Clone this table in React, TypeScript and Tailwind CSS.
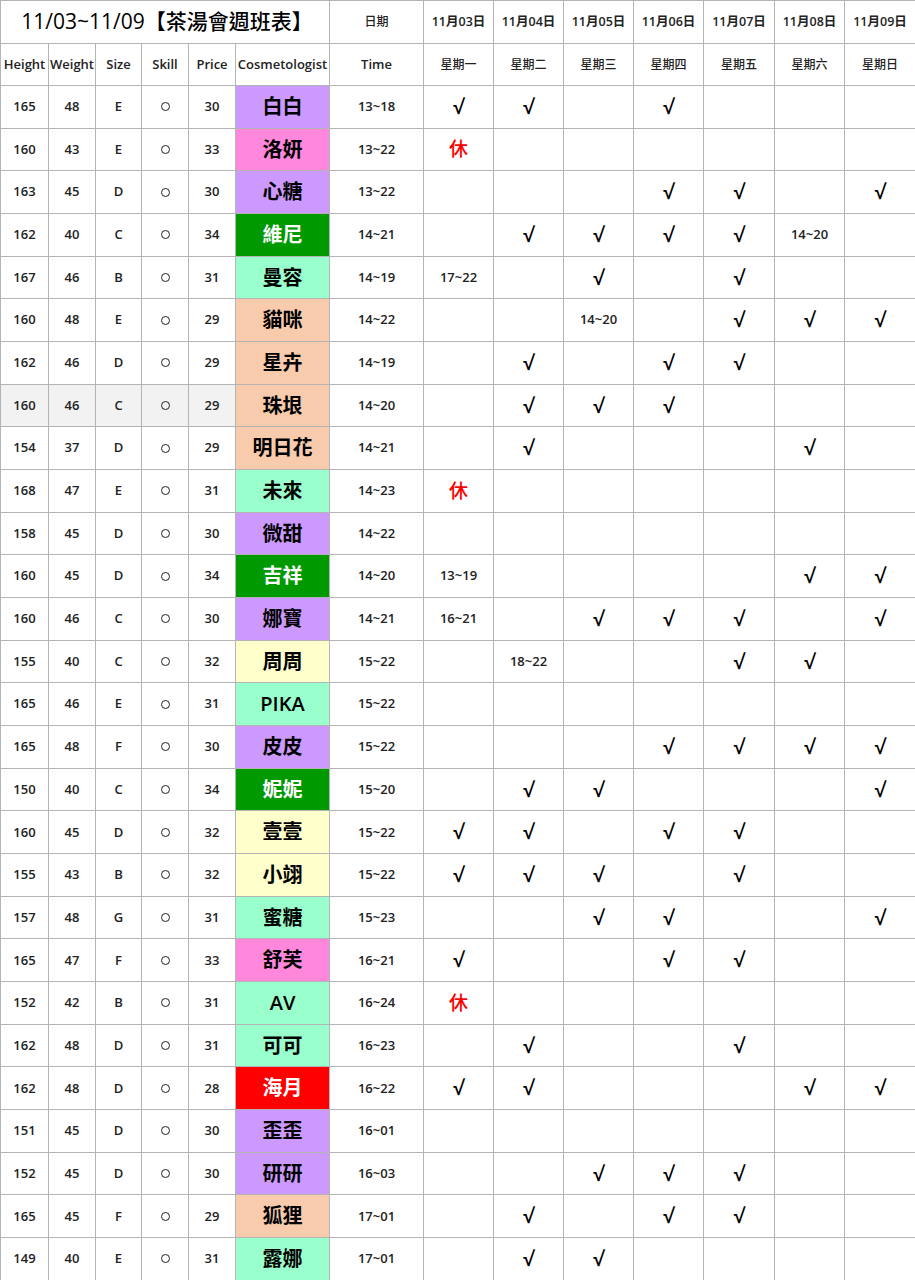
import React from 'react';

type Shift = string;

const PURPLE = 'bg-[#cc99ff] text-black';
const PINK = 'bg-[#ff88dd] text-black';
const GREEN = 'bg-[#009900] text-white';
const MINT = 'bg-[#99ffcc] text-black';
const PEACH = 'bg-[#f8cbad] text-black';
const YELLOW = 'bg-[#ffffcc] text-black';
const RED = 'bg-[#ff0000] text-white';

const V = '√';
const OFF = '休';

type Row = {
  h: number;
  w: number;
  size: string;
  price: number;
  name: string;
  colour: string;
  time: string;
  days: Shift[];
  shaded?: boolean;
};

const ROWS: Row[] = [
  { h: 165, w: 48, size: 'E', price: 30, name: '白白', colour: PURPLE, time: '13~18', days: [V, V, '', V, '', '', ''] },
  { h: 160, w: 43, size: 'E', price: 33, name: '洛妍', colour: PINK, time: '13~22', days: [OFF, '', '', '', '', '', ''] },
  { h: 163, w: 45, size: 'D', price: 30, name: '心糖', colour: PURPLE, time: '13~22', days: ['', '', '', V, V, '', V] },
  { h: 162, w: 40, size: 'C', price: 34, name: '維尼', colour: GREEN, time: '14~21', days: ['', V, V, V, V, '14~20', ''] },
  { h: 167, w: 46, size: 'B', price: 31, name: '曼容', colour: MINT, time: '14~19', days: ['17~22', '', V, '', V, '', ''] },
  { h: 160, w: 48, size: 'E', price: 29, name: '貓咪', colour: PEACH, time: '14~22', days: ['', '', '14~20', '', V, V, V] },
  { h: 162, w: 46, size: 'D', price: 29, name: '星卉', colour: PEACH, time: '14~19', days: ['', V, '', V, V, '', ''] },
  { h: 160, w: 46, size: 'C', price: 29, name: '珠垠', colour: PEACH, time: '14~20', days: ['', V, V, V, '', '', ''], shaded: true },
  { h: 154, w: 37, size: 'D', price: 29, name: '明日花', colour: PEACH, time: '14~21', days: ['', V, '', '', '', V, ''] },
  { h: 168, w: 47, size: 'E', price: 31, name: '未來', colour: MINT, time: '14~23', days: [OFF, '', '', '', '', '', ''] },
  { h: 158, w: 45, size: 'D', price: 30, name: '微甜', colour: PURPLE, time: '14~22', days: ['', '', '', '', '', '', ''] },
  { h: 160, w: 45, size: 'D', price: 34, name: '吉祥', colour: GREEN, time: '14~20', days: ['13~19', '', '', '', '', V, V] },
  { h: 160, w: 46, size: 'C', price: 30, name: '娜寶', colour: PURPLE, time: '14~21', days: ['16~21', '', V, V, V, '', V] },
  { h: 155, w: 40, size: 'C', price: 32, name: '周周', colour: YELLOW, time: '15~22', days: ['', '18~22', '', '', V, V, ''] },
  { h: 165, w: 46, size: 'E', price: 31, name: 'PIKA', colour: MINT, time: '15~22', days: ['', '', '', '', '', '', ''] },
  { h: 165, w: 48, size: 'F', price: 30, name: '皮皮', colour: PURPLE, time: '15~22', days: ['', '', '', V, V, V, V] },
  { h: 150, w: 40, size: 'C', price: 34, name: '妮妮', colour: GREEN, time: '15~20', days: ['', V, V, '', '', '', V] },
  { h: 160, w: 45, size: 'D', price: 32, name: '壹壹', colour: YELLOW, time: '15~22', days: [V, V, '', V, V, '', ''] },
  { h: 155, w: 43, size: 'B', price: 32, name: '小翊', colour: YELLOW, time: '15~22', days: [V, V, V, '', V, '', ''] },
  { h: 157, w: 48, size: 'G', price: 31, name: '蜜糖', colour: MINT, time: '15~23', days: ['', '', V, V, '', '', V] },
  { h: 165, w: 47, size: 'F', price: 33, name: '舒芙', colour: PINK, time: '16~21', days: [V, '', '', V, V, '', ''] },
  { h: 152, w: 42, size: 'B', price: 31, name: 'AV', colour: MINT, time: '16~24', days: [OFF, '', '', '', '', '', ''] },
  { h: 162, w: 48, size: 'D', price: 31, name: '可可', colour: MINT, time: '16~23', days: ['', V, '', '', V, '', ''] },
  { h: 162, w: 48, size: 'D', price: 28, name: '海月', colour: RED, time: '16~22', days: [V, V, '', '', '', V, V] },
  { h: 151, w: 45, size: 'D', price: 30, name: '歪歪', colour: PURPLE, time: '16~01', days: ['', '', '', '', '', '', ''] },
  { h: 152, w: 45, size: 'D', price: 30, name: '研研', colour: PURPLE, time: '16~03', days: ['', '', V, V, V, '', ''] },
  { h: 165, w: 45, size: 'F', price: 29, name: '狐狸', colour: PEACH, time: '17~01', days: ['', V, '', V, V, '', ''] },
  { h: 149, w: 40, size: 'E', price: 31, name: '露娜', colour: MINT, time: '17~01', days: ['', V, V, '', '', '', ''] },
];

const DATES = ['11月03日', '11月04日', '11月05日', '11月06日', '11月07日', '11月08日', '11月09日'];
const WEEKDAYS = ['星期一', '星期二', '星期三', '星期四', '星期五', '星期六', '星期日'];
const LABELS = ['Height', 'Weight', 'Size', 'Skill', 'Price', 'Cosmetologist', 'Time'];

const cell = 'flex items-center justify-center border-r border-b border-[#b4b4b4] whitespace-nowrap';

function DayCell({ value }: { value: Shift }) {
  if (value === V) {
    return <div className={`${cell} text-[20px] font-semibold text-black`}>{V}</div>;
  }
  if (value === OFF) {
    return <div className={`${cell} text-[19px] font-medium text-[#ff0000]`}>{OFF}</div>;
  }
  return <div className={`${cell} text-[13px] text-[#222]`}>{value}</div>;
}

export default function App() {
  return (
    <div
      className="w-[915px] h-[1280px] bg-white overflow-hidden text-[#222]"
      style={{ fontFamily: '"Open Sans", "Noto Sans CJK TC", sans-serif' }}
    >
      <div className="grid grid-cols-[48px_47px_46px_47px_47px_94px_94px_70px_70px_70px_70px_71px_70px_71px] grid-rows-[43px_42px_repeat(28,42.68px)] border-t border-l border-[#b4b4b4] font-semibold">
        <div className={`${cell} col-span-6 text-[21px] font-medium text-black pl-1`}>11/03~11/09【茶湯會週班表】</div>
        <div className={`${cell} text-[12px] font-medium`}>日期</div>
        {DATES.map(d => (
          <div key={d} className={`${cell} text-[12.5px]`}>{d}</div>
        ))}

        {LABELS.map(l => (
          <div key={l} className={`${cell} text-[13px]`}>{l}</div>
        ))}
        {WEEKDAYS.map(w => (
          <div key={w} className={`${cell} text-[12px] font-medium`}>{w}</div>
        ))}

        {ROWS.map(r => {
          const bg = r.shaded ? 'bg-[#f2f2f2]' : '';
          return (
            <React.Fragment key={r.name}>
              <div className={`${cell} ${bg} text-[13px]`}>{r.h}</div>
              <div className={`${cell} ${bg} text-[13px]`}>{r.w}</div>
              <div className={`${cell} ${bg} text-[13px]`}>{r.size}</div>
              <div className={`${cell} ${bg}`}>
                <span className="block w-[9px] h-[9px] rounded-full border-[1.5px] border-[#222]" />
              </div>
              <div className={`${cell} ${bg} text-[13px]`}>{r.price}</div>
              <div className={`${cell} ${r.colour} text-[20px]`}>{r.name}</div>
              <div className={`${cell} text-[13px]`}>{r.time}</div>
              {r.days.map((d, i) => (
                <DayCell key={i} value={d} />
              ))}
            </React.Fragment>
          );
        })}
      </div>
    </div>
  );
}
